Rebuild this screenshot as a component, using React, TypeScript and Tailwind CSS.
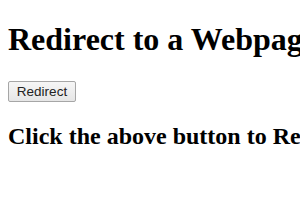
export default function App() {
  return (
    <div className="w-[300px] h-[210px] overflow-hidden bg-white px-2 font-['Liberation_Serif','Times_New_Roman',serif] text-black whitespace-nowrap">
      {/* Heading */}
      <h1 className="pt-[21px] text-[32px] font-bold leading-[37px]">Redirect to a Webpage</h1>

      <div className="mt-[23px] flex">
        <button className="h-[21px] w-[68px] border border-[#a6a6a6] rounded-[2px] bg-gradient-to-b from-[#f6f6f6] to-[#e6e6e6] text-[13.5px] leading-none text-[#222] font-['Liberation_Sans',Arial,sans-serif]">
          Redirect
        </button>
      </div>

      <h2 className="mt-[20px] text-[24px] font-bold leading-[28px]">
        Click the above button to Redirect
      </h2>
    </div>
  );
}
